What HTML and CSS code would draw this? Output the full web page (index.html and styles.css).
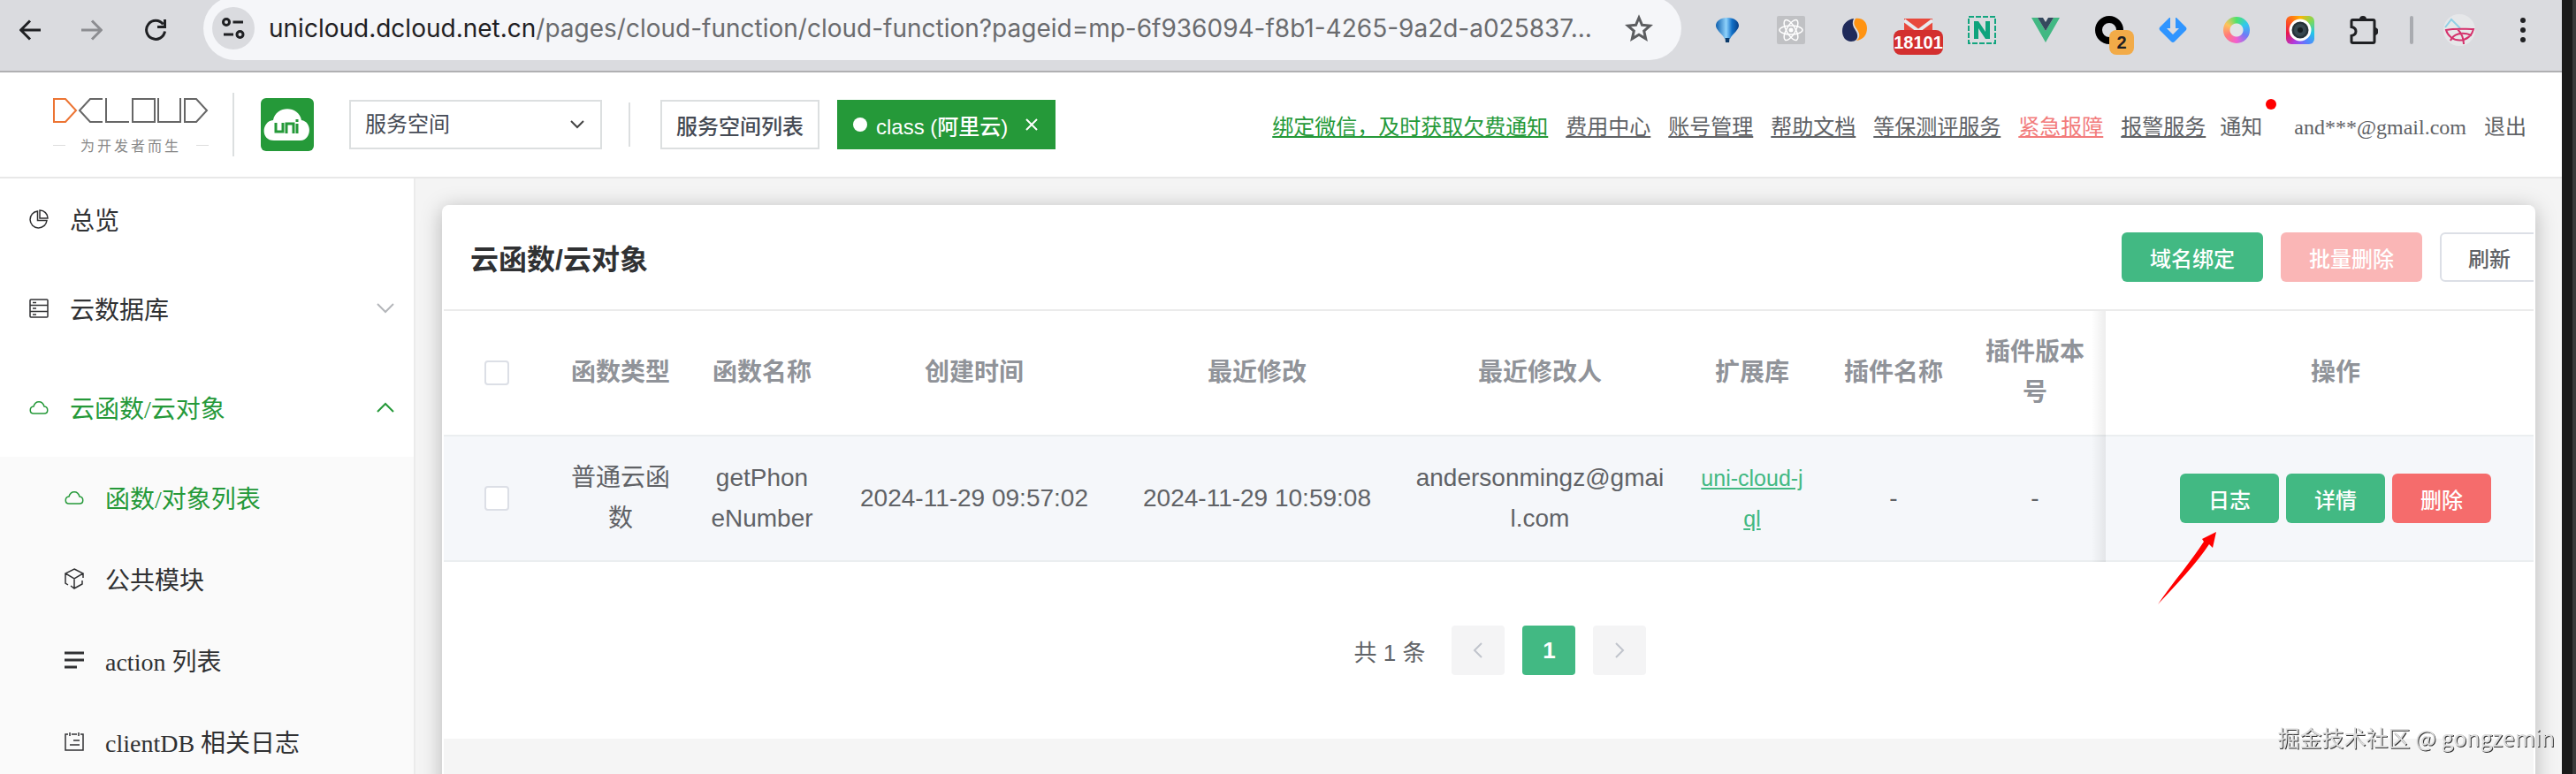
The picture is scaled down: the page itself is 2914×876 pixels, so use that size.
FILE: index.html
```html
<!DOCTYPE html>
<html lang="zh-CN">
    <head>
        <meta charset="UTF-8">
        <meta name="viewport" content="width=device-width, initial-scale=1.0">
        <title>云函数/云对象</title>
        <link rel="stylesheet" href="styles.css">
    </head>

    <body>
        <div class="window">
            <!-- 浏览器工具栏 -->
            <div class="browser-bar">
                <button class="nav-button" aria-label="后退">
                    <svg width="24" height="24" viewBox="0 0 24 24"><path d="M24 12H2M12 1.500 1.500 12 12 22.500" fill="none" stroke="#1f2023" stroke-width="3"/></svg>
                </button>
                <button class="nav-button" aria-label="前进">
                    <svg width="24" height="24" viewBox="0 0 24 24"><path d="M0 12h22M12 1.500 22.500 12 12 22.500" fill="none" stroke="#8c8d91" stroke-width="3"/></svg>
                </button>
                <button class="nav-button" aria-label="刷新页面">
                    <svg width="26" height="26" viewBox="0 0 26 26"><path d="M21.500 6.500A10.500 10.500 0 1 0 23.500 14.500M23.500 1v8.500H15" fill="none" stroke="#1f2023" stroke-width="3"/></svg>
                </button>
                <div class="address">
                    <span class="site-info">
                        <svg width="26" height="24" viewBox="0 0 26 24" fill="none" stroke="#1f2023" stroke-width="3"><circle cx="5" cy="5" r="3.500"/><path d="M12.500 5H24M2 19h11"/><circle cx="20.500" cy="19" r="3.500"/></svg>
                    </span>
                    <span class="url"><span class="host">unicloud.dcloud.net.cn</span>/pages/cloud-function/cloud-function?pageid=mp-6f936094-f8b1-4265-9a2d-a025837...</span>
                    <svg class="star" width="32" height="32" viewBox="0 0 32 32"><path d="m16 4 3.500 8.300 9 .8-6.800 5.900 2 8.800L16 23.200l-7.700 4.600 2-8.800-6.800-5.900 9-.8z" fill="none" stroke="#5c5d60" stroke-width="3"/></svg>
                </div>
                <div class="extensions">
                    <span class="ext">
                        <svg width="32" height="32" viewBox="0 0 32 32"><defs><linearGradient id="balloon"><stop offset="0" stop-color="#0d5fae"/><stop offset=".45" stop-color="#8fd2fb"/><stop offset=".7" stop-color="#1170c8"/><stop offset="1" stop-color="#083f86"/></linearGradient></defs><path d="M16 2C8 2 3 6 3 11c0 5 7 9 10 15h6c3-6 10-10 10-15 0-5-5-9-13-9z" fill="url(#balloon)"/><path d="M13.500 25h5l-.5 5h-4z" fill="#0a3a6b"/></svg>
                    </span>
                    <span class="ext">
                        <svg width="32" height="32" viewBox="0 0 32 32"><rect width="32" height="32" rx="2" fill="#c0c1c4"/><g fill="none" stroke="#fff" stroke-width="1.500"><ellipse cx="16" cy="16" rx="13" ry="5"/><ellipse cx="16" cy="16" rx="13" ry="5" transform="rotate(60 16 16)"/><ellipse cx="16" cy="16" rx="13" ry="5" transform="rotate(120 16 16)"/></g><circle cx="16" cy="16" r="2.500" fill="#fff"/></svg>
                    </span>
                    <span class="ext">
                        <svg width="32" height="32" viewBox="0 0 32 32"><path d="M15 3C8 4 2 9 2 17c0 7 4 12 10 12 5 0 8-3 7-8-1-6-8-9-4-18z" fill="#1f2a5a"/><path d="M17 3c-5 8 3 11 4 17 1 4-1 6-3 8 7-1 12-6 12-14C30 7 25 2 17 3z" fill="#ff9312"/></svg>
                    </span>
                    <span class="ext">
                        <svg width="32" height="32" viewBox="0 0 32 32"><path d="M0 3h32v24H0z" fill="#e8493c"/><path d="m0 5 16 12L32 5" fill="none" stroke="#e8eaed" stroke-width="4"/></svg>
                        <span class="ext-badge mail-badge">18101</span>
                    </span>
                    <span class="ext">
                        <svg width="32" height="32" viewBox="0 0 32 32"><rect x="1" y="1" width="30" height="30" fill="none" stroke="#12a57f" stroke-width="2" stroke-dasharray="6 2"/><path d="M7 26V6h5l8 12V6h5v20h-5l-8-12v12z" fill="#0fa37c"/></svg>
                    </span>
                    <span class="ext">
                        <svg width="32" height="32" viewBox="0 0 32 32"><path d="M0 2h7l9 15 9-15h7L16 30z" fill="#42b883"/><path d="M7 2h6l3 5 3-5h6l-9 15z" fill="#35495e"/></svg>
                    </span>
                    <span class="ext">
                        <svg width="32" height="32" viewBox="0 0 32 32"><circle cx="16" cy="16" r="12" fill="none" stroke="#000" stroke-width="8"/></svg>
                        <span class="ext-badge count-badge">2</span>
                    </span>
                    <span class="ext">
                        <svg width="32" height="32" viewBox="0 0 32 32"><path d="M12 2 1 13q-1 1.500 0 3l13 13q2 2 4 0l13-13q1-1.500 0-3L20 2z" fill="#2f95ff"/><path d="M13 0h6v14h4l-7 7-7-7h4z" fill="#dadbdf"/></svg>
                    </span>
                    <span class="ext">
                        <span class="color-ring"></span>
                    </span>
                    <span class="ext">
                        <span class="camera">
                            <svg width="26" height="26" viewBox="0 0 26 26"><circle cx="13" cy="13" r="11" fill="#263238" stroke="#fff" stroke-width="3"/><circle cx="13" cy="13" r="7" fill="#37474f"/><circle cx="13" cy="13" r="3" fill="#141c20"/></svg>
                        </span>
                    </span>
                    <span class="ext">
                        <svg width="32" height="34" viewBox="0 0 32 34"><path d="M3.500 5.500h23q1.500 0 1.500 1.500v23q0 1.500-1.500 1.500h-23Q2 31.500 2 30v-6.500q5-1 5-5t-5-5V7q0-1.500 1.500-1.500z" fill="none" stroke="#1f2023" stroke-width="3"/><path d="M11 5a4 4 0 0 1 8 0zM28 14a4 4 0 0 1 0 9z" fill="#1f2023"/></svg>
                    </span>
                    <span class="bar-divider"></span>
                    <span class="ext">
                        <svg width="38" height="38" viewBox="0 0 38 38"><circle cx="19" cy="19" r="18" fill="#e6e7e9"/><path d="m3 16 7-9 10 10" fill="none" stroke="#8fd0e6" stroke-width="2"/><g fill="none" stroke="#d5316c" stroke-width="2"><path d="M4 19c10-2 20-1 31-1a16 16 0 0 1-31 1zM17 18c6 6 7 11 7 17M9 31c3-7 12-11 24-6"/></g></svg>
                    </span>
                    <span class="ext">
                        <svg width="8" height="32" viewBox="0 0 8 32" fill="#1f2023"><circle cx="4" cy="5" r="3"/><circle cx="4" cy="16" r="3"/><circle cx="4" cy="27" r="3"/></svg>
                    </span>
                </div>
            </div>

            <!-- 顶部导航 -->
            <header class="header">
                <div class="brand">
                    <svg width="176" height="28" viewBox="0 0 176 28" fill="none" stroke-width="2"><path d="M1 1h13l12 13-12 13H1z" stroke="#ec7433"/><path d="M56 1H42L30 14l12 13h14M60 0v27h26M90 1h25v26H90zM119 0v27h25V0M149 1h13l12 13-12 13h-13z" stroke="#666"/></svg>
                    <p class="slogan">为开发者而生</p>
                </div>
                <div class="brand-divider"></div>
                <svg class="uni-logo" width="60" height="60" viewBox="0 0 60 60"><rect width="60" height="60" rx="6" fill="#259939"/><path d="M15 48C-1 48 1 26 14 25 17 8 43 8 46 25c13 2 11 23-1 23z" fill="#fff"/><path d="M17 28v10h8V28M29 40V29h8v11M41 29v11M41 24v3" fill="none" stroke="#259939" stroke-width="3"/></svg>
                <select class="space-select" aria-label="服务空间">
                    <option selected>服务空间</option>
                </select>
                <div class="header-divider"></div>
                <button class="space-list-button">服务空间列表</button>
                <button class="space-tag">
                    <span class="tag-dot"></span>
                    <span>class (阿里云)</span>
                    <svg class="tag-close" width="14" height="14" viewBox="0 0 14 14"><path d="m1 1 12 12M13 1 1 13" stroke="#fff" stroke-width="2"/></svg>
                </button>
                <nav class="header-links">
                    <a class="green" href="#">绑定微信，及时获取欠费通知</a>
                    <a href="#">费用中心</a>
                    <a href="#">账号管理</a>
                    <a href="#">帮助文档</a>
                    <a href="#">等保测评服务</a>
                    <a class="red" href="#">紧急报障</a>
                    <a href="#">报警服务</a>
                    <a class="plain notice" href="#">通知</a>
                    <span>and***@gmail.com</span>
                    <a class="plain" href="#">退出</a>
                </nav>
            </header>

            <div class="body">
                <!-- 左侧菜单 -->
                <aside class="sidebar">
                    <ul class="menu">
                        <li><a class="menu-item overview" href="#">
                            <svg width="22" height="22" viewBox="0 0 22 22" fill="none" stroke="#303133" stroke-width="1.500"><path d="M9.500 2A9.500 9.500 0 1 0 20 12.500H9.500z"/><path d="M12 1v9h9a9 9 0 0 0-9-9z"/></svg>
                            <span>总览</span>
                        </a></li>
                        <li><a class="menu-item" href="#">
                            <svg width="22" height="22" viewBox="0 0 22 22" fill="none" stroke="#303133" stroke-width="1.500"><rect x="1" y="1" width="20" height="20" rx="1"/><path d="M1 7.500h20M1 14.500h20M4 4.500h4M4 11h4M4 18h4"/></svg>
                            <span>云数据库</span>
                            <svg class="menu-arrow" width="20" height="12" viewBox="0 0 20 12"><path d="m1 1 9 9 9-9" fill="none" stroke="#b4b6ba" stroke-width="2"/></svg>
                        </a></li>
                        <li>
                            <a class="menu-item active" href="#">
                                <svg width="22" height="22" viewBox="0 0 22 22" fill="none" stroke="#259939" stroke-width="1.500"><path d="M5 18C0 18 0 10.500 5 10 7 3 15 3 17 10c5 .5 5 8 0 8z"/></svg>
                                <span>云函数/云对象</span>
                                <svg class="menu-arrow" width="20" height="12" viewBox="0 0 20 12"><path d="m1 11 9-9 9 9" fill="none" stroke="#259939" stroke-width="2"/></svg>
                            </a>
                            <ul class="submenu">
                                <li><a class="menu-item active" href="#">
                                    <svg width="22" height="22" viewBox="0 0 22 22" fill="none" stroke="#259939" stroke-width="1.500"><path d="M5 18C0 18 0 10.500 5 10 7 3 15 3 17 10c5 .5 5 8 0 8z"/></svg>
                                    <span>函数/对象列表</span>
                                </a></li>
                                <li><a class="menu-item" href="#">
                                    <svg width="22" height="24" viewBox="0 0 22 24" fill="none" stroke="#303133" stroke-width="1.500"><path d="m11 1 10 5-10 6L1 6zM11 12v11M1 6v11l3 2M21 6v5M7 20l4 3 9-5v-4"/></svg>
                                    <span>公共模块</span>
                                </a></li>
                                <li><a class="menu-item" href="#">
                                    <svg width="22" height="22" viewBox="0 0 22 22" fill="none" stroke="#303133" stroke-width="3"><path d="M0 3h22M0 11h22M0 19h14"/></svg>
                                    <span>action 列表</span>
                                </a></li>
                                <li><a class="menu-item" href="#">
                                    <svg width="22" height="22" viewBox="0 0 22 22" fill="none" stroke="#303133" stroke-width="1.500"><path d="M4 3H1v18h20V3h-3M8 3h6M6 1v4M16 1v4M10 10h7M6 15h11"/></svg>
                                    <span>clientDB 相关日志</span>
                                </a></li>
                            </ul>
                        </li>
                    </ul>
                </aside>

                <!-- 右侧内容 -->
                <main class="main">
                    <div class="card">
                        <div class="card-inner">
                            <div class="card-header">
                                <h1>云函数/云对象</h1>
                                <div class="toolbar">
                                    <button class="button primary">域名绑定</button>
                                    <button class="button danger-disabled" disabled>批量删除</button>
                                    <button class="button default">刷新</button>
                                </div>
                            </div>
                            <table class="function-table">
                                <colgroup>
                                    <col class="col-check">
                                    <col class="col-small">
                                    <col class="col-small">
                                    <col class="col-large">
                                    <col class="col-large">
                                    <col class="col-large">
                                    <col class="col-small">
                                    <col class="col-small">
                                    <col class="col-small">
                                    <col>
                                </colgroup>
                                <thead>
                                    <tr>
                                        <th><input class="check" type="checkbox" aria-label="全选"></th>
                                        <th>函数类型</th>
                                        <th>函数名称</th>
                                        <th>创建时间</th>
                                        <th>最近修改</th>
                                        <th>最近修改人</th>
                                        <th>扩展库</th>
                                        <th>插件名称</th>
                                        <th>插件版本号</th>
                                        <th class="fixed">操作</th>
                                    </tr>
                                </thead>
                                <tbody>
                                    <tr>
                                        <td><input class="check" type="checkbox" aria-label="选择 getPhoneNumber"></td>
                                        <td>普通云函数</td>
                                        <td>getPhon<br>eNumber</td>
                                        <td>2024-11-29 09:57:02</td>
                                        <td>2024-11-29 10:59:08</td>
                                        <td>andersonmingz@gmai<br>l.com</td>
                                        <td><a class="ext-link" href="#">uni-cloud-jql</a></td>
                                        <td>-</td>
                                        <td>-</td>
                                        <td class="fixed">
                                            <div class="actions">
                                                <button class="button primary">日志</button>
                                                <button class="button primary">详情</button>
                                                <button class="button danger">删除</button>
                                                <svg class="arrow" width="68" height="84" viewBox="0 0 68 84"><path d="M67 1 63 19 59 15C44 38 22 60 1 83 18 58 39 34 53 12L51 9z" fill="#f00"/></svg>
                                            </div>
                                        </td>
                                    </tr>
                                </tbody>
                            </table>
                            <div class="pagination">
                                <span class="total">共 1 条</span>
                                <button class="page" disabled aria-label="上一页"><svg width="12" height="20" viewBox="0 0 12 20"><path d="m10 2-8 8 8 8" fill="none" stroke="#c0c4cc" stroke-width="2"/></svg></button>
                                <button class="page current">1</button>
                                <button class="page" disabled aria-label="下一页"><svg width="12" height="20" viewBox="0 0 12 20"><path d="m2 2 8 8-8 8" fill="none" stroke="#c0c4cc" stroke-width="2"/></svg></button>
                            </div>
                        </div>
                    </div>
                </main>
            </div>
        </div>
        <div class="watermark">掘金技术社区 @ gongzemin</div>
    </body>
</html>
```

FILE: styles.css
```css
html{
    height: 100%;
}
body{
    height: 100%;
    margin: 0;
    box-sizing: border-box;
    padding-right: 16px;
    overflow: hidden;
    background: linear-gradient(to left, #3a3a3a 4px, #1a1a1a 4px);
    font-family: "Liberation Serif", "Noto Sans CJK SC", serif;
    color: #606266;
}
button, select, input{
    font: inherit;
    margin: 0;
}
ul{
    list-style: none;
    margin: 0;
    padding: 0;
}
a{
    color: inherit;
}
svg{
    display: block;
    flex: none;
}
.window{
    display: flex;
    flex-direction: column;
    height: 100%;
    background-color: #f4f4f4;
}

/* 浏览器工具栏 */
.browser-bar{
    display: flex;
    align-items: center;
    box-sizing: border-box;
    height: 82px;
    padding: 0 8px 12px 0;
    border-bottom: 2px solid #b0b0b2;
    background-color: #dadbdf;
}
.nav-button{
    display: flex;
    justify-content: center;
    width: 72px;
    padding: 0;
    border: none;
    background: none;
}
.nav-button:first-child{
    width: 68px;
}
.address{
    display: flex;
    align-items: center;
    flex: 1;
    min-width: 0;
    height: 72px;
    margin: -4px 16px 0 18px;
    border-radius: 36px;
    background-color: #f5f6f9;
    font-family: Inter, Roboto, sans-serif;
    font-size: 28px;
    color: #6a6b6e;
}
.site-info{
    display: flex;
    align-items: center;
    justify-content: center;
    flex: none;
    width: 48px;
    height: 48px;
    margin: 0 16px 0 10px;
    border-radius: 50%;
    background-color: #dadbdf;
}
.url{
    flex: 1;
    white-space: nowrap;
    overflow: hidden;
}
.host{
    color: #1f2023;
}
.star{
    margin-right: 32px;
}
.extensions{
    display: flex;
    align-items: center;
}
.ext{
    position: relative;
    display: flex;
    justify-content: center;
    width: 72px;
}
.ext-badge{
    position: absolute;
    top: 16px;
    height: 28px;
    border-radius: 8px;
    font-family: "Liberation Sans", sans-serif;
    font-weight: bold;
    font-size: 20px;
    line-height: 28px;
    text-align: center;
}
.mail-badge{
    left: 8px;
    width: 56px;
    background-color: #d32f2f;
    color: white;
}
.count-badge{
    left: 36px;
    width: 28px;
    background-color: #f2ab48;
    color: #1f2023;
}
.color-ring{
    box-sizing: border-box;
    width: 30px;
    height: 30px;
    border-radius: 50%;
    background: radial-gradient(#e3e4e7 7px, transparent 8px), conic-gradient(#4de36b, #30c8f0, #6f7bf7, #f25fd0, #ff7a7a, #ffc35c, #4de36b);
}
.camera{
    display: flex;
    align-items: center;
    justify-content: center;
    width: 32px;
    height: 32px;
    border-radius: 6px;
    background: conic-gradient(#ffb300, #7ed957, #21c7e8, #5b7cff, #b03ae0, #e8174b, #ff5a1f, #ffb300);
}
.bar-divider{
    width: 4px;
    height: 32px;
    margin: 0 16px;
    border-radius: 2px;
    background-color: #a9abb0;
}

/* 顶部导航 */
.header{
    display: flex;
    align-items: center;
    box-sizing: border-box;
    height: 120px;
    padding: 0 40px 0 60px;
    border-bottom: 2px solid #e8e8e8;
    background-color: white;
    font-size: 24px;
    white-space: nowrap;
}
.brand{
    width: 176px;
    padding-top: 4px;
}
.slogan{
    display: flex;
    align-items: center;
    justify-content: space-between;
    margin: 14px 0 0;
    font-family: "Noto Sans CJK SC", sans-serif;
    font-size: 16px;
    line-height: 22px;
    letter-spacing: 3px;
    color: #888;
}
.slogan::before, .slogan::after{
    content: "";
    width: 14px;
    height: 1px;
    background-color: #ddd;
}
.brand-divider{
    width: 2px;
    height: 72px;
    margin: 0 30px 0 27px;
    background-color: #dcdfe0;
}
.space-select{
    appearance: none;
    box-sizing: border-box;
    width: 286px;
    height: 56px;
    margin-left: 40px;
    padding: 0 16px;
    border: 2px solid #dcdfe0;
    border-radius: 0;
    background: white url("data:image/svg+xml,%3Csvg xmlns='http://www.w3.org/2000/svg' width='16' height='10'%3E%3Cpath d='m1 1 7 7 7-7' fill='none' stroke='%23444' stroke-width='2'/%3E%3C/svg%3E") no-repeat right 18px center;
    color: #454a54;
}
.header-divider{
    width: 2px;
    height: 50px;
    margin: 0 34px 0 30px;
    background-color: #dcdfe0;
}
.space-list-button{
    height: 56px;
    padding: 0 16px;
    border: 2px solid #dcdfe0;
    background-color: white;
    font-family: "Liberation Sans", "Noto Sans CJK SC", sans-serif;
    font-weight: 500;
    color: #454a54;
}
.space-tag{
    display: flex;
    align-items: center;
    height: 56px;
    margin-left: 20px;
    padding: 0 20px 0 18px;
    border: none;
    background-color: #259939;
    font-family: "Liberation Sans", "Noto Sans CJK SC", sans-serif;
    font-weight: 500;
    color: white;
}
.tag-dot{
    width: 16px;
    height: 16px;
    margin-right: 10px;
    border-radius: 50%;
    background-color: white;
}
.tag-close{
    margin-left: 20px;
}
.header-links{
    display: flex;
    align-items: baseline;
    gap: 20px;
    margin-left: auto;
}
.header-links .green{
    color: #259939;
}
.header-links .red{
    color: #f27c7c;
}
.plain{
    text-decoration: none;
}
.notice{
    position: relative;
    margin-right: 16px;
    margin-left: -4px;
}
.notice::after{
    content: "";
    position: absolute;
    top: -12px;
    right: -16px;
    width: 12px;
    height: 12px;
    border-radius: 50%;
    background-color: #f00;
}

.body{
    display: flex;
    flex: 1;
    min-height: 0;
}

/* 左侧菜单 */
.sidebar{
    flex: none;
    width: 468px;
    border-right: 2px solid #ebebeb;
    background-color: white;
    font-size: 28px;
    overflow: hidden;
}
.menu-item{
    display: flex;
    align-items: center;
    gap: 24px;
    height: 112px;
    padding: 0 22px 0 33px;
    color: #303133;
    text-decoration: none;
}
.overview{
    height: 91px;
}
.menu-arrow{
    margin-left: auto;
}
.active{
    color: #259939;
}
.submenu{
    background-color: #fafafa;
}
.submenu .menu-item{
    height: 92px;
    padding-left: 73px;
}

/* 右侧内容 */
.main{
    flex: 1;
    min-width: 0;
    padding: 30px 30px 0;
    overflow: hidden;
    font-family: "Liberation Sans", "Noto Sans CJK SC", sans-serif;
}
/* 卡片底部延伸到窗口之外 */
.card{
    height: calc(100% + 20px);
    border: 2px solid white;
    border-top: none;
    border-radius: 8px;
    background-color: #f5f5f5;
    box-shadow: 0 4px 24px rgba(0, 0, 0, 0.26);
    overflow: hidden;
}
/* 内容比卡片宽，右侧超出部分被裁掉 */
.card-inner{
    margin-right: -36px;
    background-color: white;
}
.card-header{
    display: flex;
    align-items: center;
    justify-content: space-between;
    height: 118px;
    padding: 0 30px;
    border-bottom: 2px solid #ebebeb;
}
.card-header h1{
    margin: 0;
    font-size: 32px;
    color: #303133;
}
.toolbar{
    display: flex;
    gap: 20px;
}
.button{
    box-sizing: border-box;
    height: 56px;
    padding: 0 32px;
    border: none;
    border-radius: 6px;
    font-size: 24px;
    font-weight: 500;
    color: white;
}
.primary{
    background-color: #42b983;
}
.danger{
    background-color: #f56c6c;
}
.danger-disabled{
    background-color: #fab6b6;
}
.default{
    padding: 0 30px;
    border: 2px solid #dcdfe6;
    background-color: white;
    color: #606266;
}

.function-table{
    width: 100%;
    table-layout: fixed;
    border-collapse: separate;
    border-spacing: 0;
    font-size: 28px;
    line-height: 46px;
    text-align: center;
}
.col-check{
    width: 120px;
}
.col-small{
    width: 160px;
}
.col-large{
    width: 320px;
}
.function-table th, .function-table td{
    box-sizing: border-box;
    height: 142px;
    padding: 24px 18px;
    border-bottom: 2px solid #ebeef0;
    word-break: break-all;
}
.function-table th{
    font-weight: bold;
    color: #909399;
}
.function-table td{
    background-color: #f5f7fa;
}
/* 固定列左侧的阴影 */
.function-table .fixed{
    position: relative;
}
.fixed::before{
    content: "";
    position: absolute;
    top: 0;
    bottom: -2px;
    left: -16px;
    width: 16px;
    background: linear-gradient(to left, rgba(0, 0, 0, 0.07), transparent);
}
.check{
    appearance: none;
    display: block;
    box-sizing: border-box;
    width: 28px;
    height: 28px;
    margin: 0 0 0 28px;
    border: 2px solid #dcdfe6;
    border-radius: 4px;
    background-color: white;
}
.ext-link{
    font-size: 25px;
    color: #42b983;
}
.actions{
    position: relative;
    display: flex;
    justify-content: center;
    gap: 8px;
    line-height: normal;
}
.arrow{
    position: absolute;
    top: 65px;
    left: 40px;
}

.pagination{
    display: flex;
    align-items: center;
    justify-content: center;
    gap: 20px;
    padding: 72px 10px 72px 0;
    font-size: 26px;
}
.total{
    margin-right: 10px;
}
.page{
    display: flex;
    align-items: center;
    justify-content: center;
    width: 60px;
    height: 56px;
    padding: 0;
    border: none;
    border-radius: 4px;
    background-color: #f4f4f5;
}
.current{
    background-color: #42b983;
    font-weight: bold;
    color: white;
}

.watermark{
    position: fixed;
    right: 24px;
    bottom: 24px;
    font-family: "Noto Sans CJK SC", sans-serif;
    font-size: 25px;
    line-height: 36px;
    color: #ddd;
    text-shadow: 1px 1px 0 #333;
}
```
